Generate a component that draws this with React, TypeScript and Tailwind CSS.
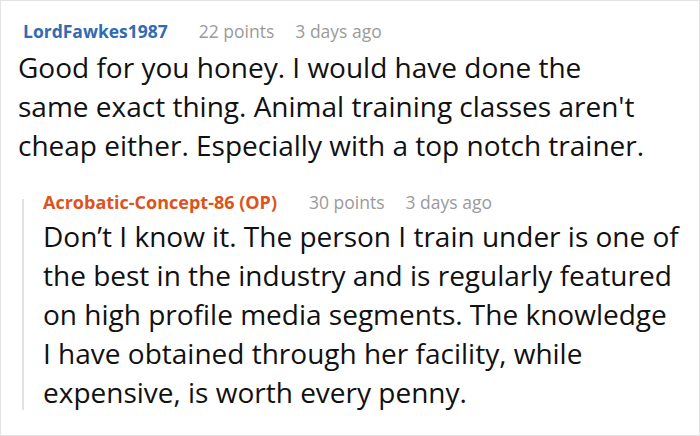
export default function App() {
  return (
    <div className="w-[700px] h-[436px] bg-white border border-[#e3e3e3] font-['Open_Sans',sans-serif] overflow-hidden">
      <div className="pl-[22px] pt-[17px]">
        <div className="flex items-baseline text-[17.5px] leading-[26px]">
          <span className="font-bold text-[#336ab4]">LordFawkes1987</span>
          <span className="ml-[31px] text-[#9a9a9a]">22 points</span>
          <span className="ml-[21px] text-[#9a9a9a]">3 days ago</span>
        </div>
        <p className="-ml-[5px] mt-[4px] text-[28px] leading-[39px] text-[#111] whitespace-nowrap">
          Good for you honey. I would have done the
          <br />
          same exact thing. Animal training classes aren't
          <br />
          cheap either. Especially with a top notch trainer.
        </p>
      </div>
      <div className="mt-[24px] ml-[21px] flex">
        <div className="w-[2px] bg-[#e2e2e2] mt-[10px] mb-[2px]" />
        <div className="pl-[19px]">
          <div className="flex items-baseline text-[17.5px] leading-[26px]">
            <span className="font-bold text-[18px] text-[#dc5320]">Acrobatic-Concept-86 (OP)</span>
            <span className="ml-[32px] text-[#9a9a9a]">30 points</span>
            <span className="ml-[21px] text-[#9a9a9a]">3 days ago</span>
          </div>
          <p className="mt-[2px] text-[28px] leading-[39px] text-[#111] whitespace-nowrap">
            Don’t I know it. The person I train under is one of
            <br />
            the best in the industry and is regularly featured
            <br />
            on high profile media segments. The knowledge
            <br />
            I have obtained through her facility, while
            <br />
            expensive, is worth every penny.
          </p>
        </div>
      </div>
    </div>
  );
}
